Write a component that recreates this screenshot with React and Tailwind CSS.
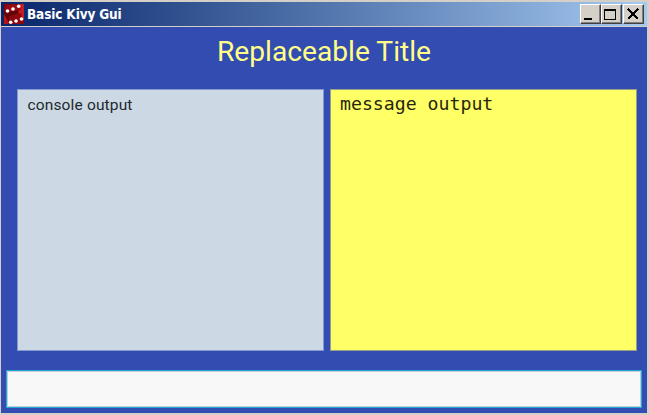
function DiceIcon() {
  return (
    <svg width="20" height="20" viewBox="0 0 20 20" className="block shrink-0">
      <rect width="20" height="20" fill="#84060c" />
      <path d="M16 0H20V16L13 17Z" fill="#c81c24" />
      <path d="M0 7L14 6L12 20H0Z" fill="#620408" />
      <path d="M2 1L15 0L17 6L1 8Z" fill="#980b12" />
      <path d="M5 12L17 9L20 20H5Z" fill="#8c080e" />
      <path d="M0 10L5 19L3 20H0Z" fill="#b5141c" />
      <g fill="#fff">
        <circle cx="3.5" cy="7" r="1.8" />
        <circle cx="9" cy="5" r="1.8" />
        <circle cx="14.7" cy="2.2" r="1.8" />
        <circle cx="6.7" cy="18.2" r="1.8" />
        <circle cx="12" cy="17" r="1.8" />
        <circle cx="17.5" cy="15" r="1.8" />
      </g>
    </svg>
  );
}

function WindowButton({ label, className = "", children }) {
  return (
    <button
      aria-label={label}
      className={`h-5 w-[21px] border border-t-white border-l-white border-r-[#404040] border-b-[#404040] bg-[#d4d0c8] shadow-[inset_-1px_-1px_0_#808080] ${className}`}
    >
      <svg width="19" height="18" viewBox="0 0 19 18" shapeRendering="crispEdges" className="block">
        {children}
      </svg>
    </button>
  );
}

export default function App() {
  return (
    <div className="flex h-[415px] w-[649px] flex-col overflow-hidden border-t-2 border-r-2 border-b-2 border-l border-[#d4d0c8] bg-[#324cb2]">
      <header className="flex h-[25px] shrink-0 items-start border-b border-[#d4d0c8] bg-linear-to-r from-[#0a246a] to-[#a6caf0] pt-[2px] pr-[3px] pl-[3px]">
        <DiceIcon />
        <span className="ml-[3px] whitespace-nowrap font-['DejaVu_Sans_Condensed','DejaVu_Sans',sans-serif] text-[13.5px] leading-5 font-bold tracking-[-0.15px] text-white">
          Basic Kivy Gui
        </span>
        <div className="ml-auto flex">
          <WindowButton label="Minimize">
            <path d="M3 13H11V15H3Z" fill="#000" />
          </WindowButton>
          <WindowButton label="Maximize">
            <path d="M2 4H14V15H2ZM3 6V14H13V6Z" fillRule="evenodd" fill="#000" />
          </WindowButton>
          <WindowButton label="Close" className="ml-px">
            <path d="M4 4L14 14M14 4L4 14" stroke="#000" strokeWidth="2" />
          </WindowButton>
        </div>
      </header>
      <h1 className="mt-[7px] h-9 shrink-0 text-center font-[Roboto,sans-serif] text-[28.2px] leading-9 font-normal text-[#ffff88]">
        Replaceable Title
      </h1>
      <main className="mt-[19px] mr-[10px] ml-4 grid h-[262px] shrink-0 grid-cols-2 gap-[6px]">
        <section className="border border-[#8497ce] bg-[#ccd8e4] px-[9.5px] pt-[5px] font-[Roboto,sans-serif] text-[15.5px] leading-5 tracking-[0.15px] text-[#22282e]">
          console output
        </section>
        <section className="border border-[#989f88] bg-[#ffff66] px-[9px] pt-1 font-['DejaVu_Sans_Mono',monospace] text-[18.2px] leading-5 text-[#26260f]">
          message output
        </section>
      </main>
      <input
        aria-label="Input"
        className="mt-[19px] ml-[5px] h-[38px] w-[636px] shrink-0 border border-[#20a8da] bg-[#f8f8f8] shadow-[inset_0_0_0_1px_#c4ccd2] outline-none"
      />
    </div>
  );
}
